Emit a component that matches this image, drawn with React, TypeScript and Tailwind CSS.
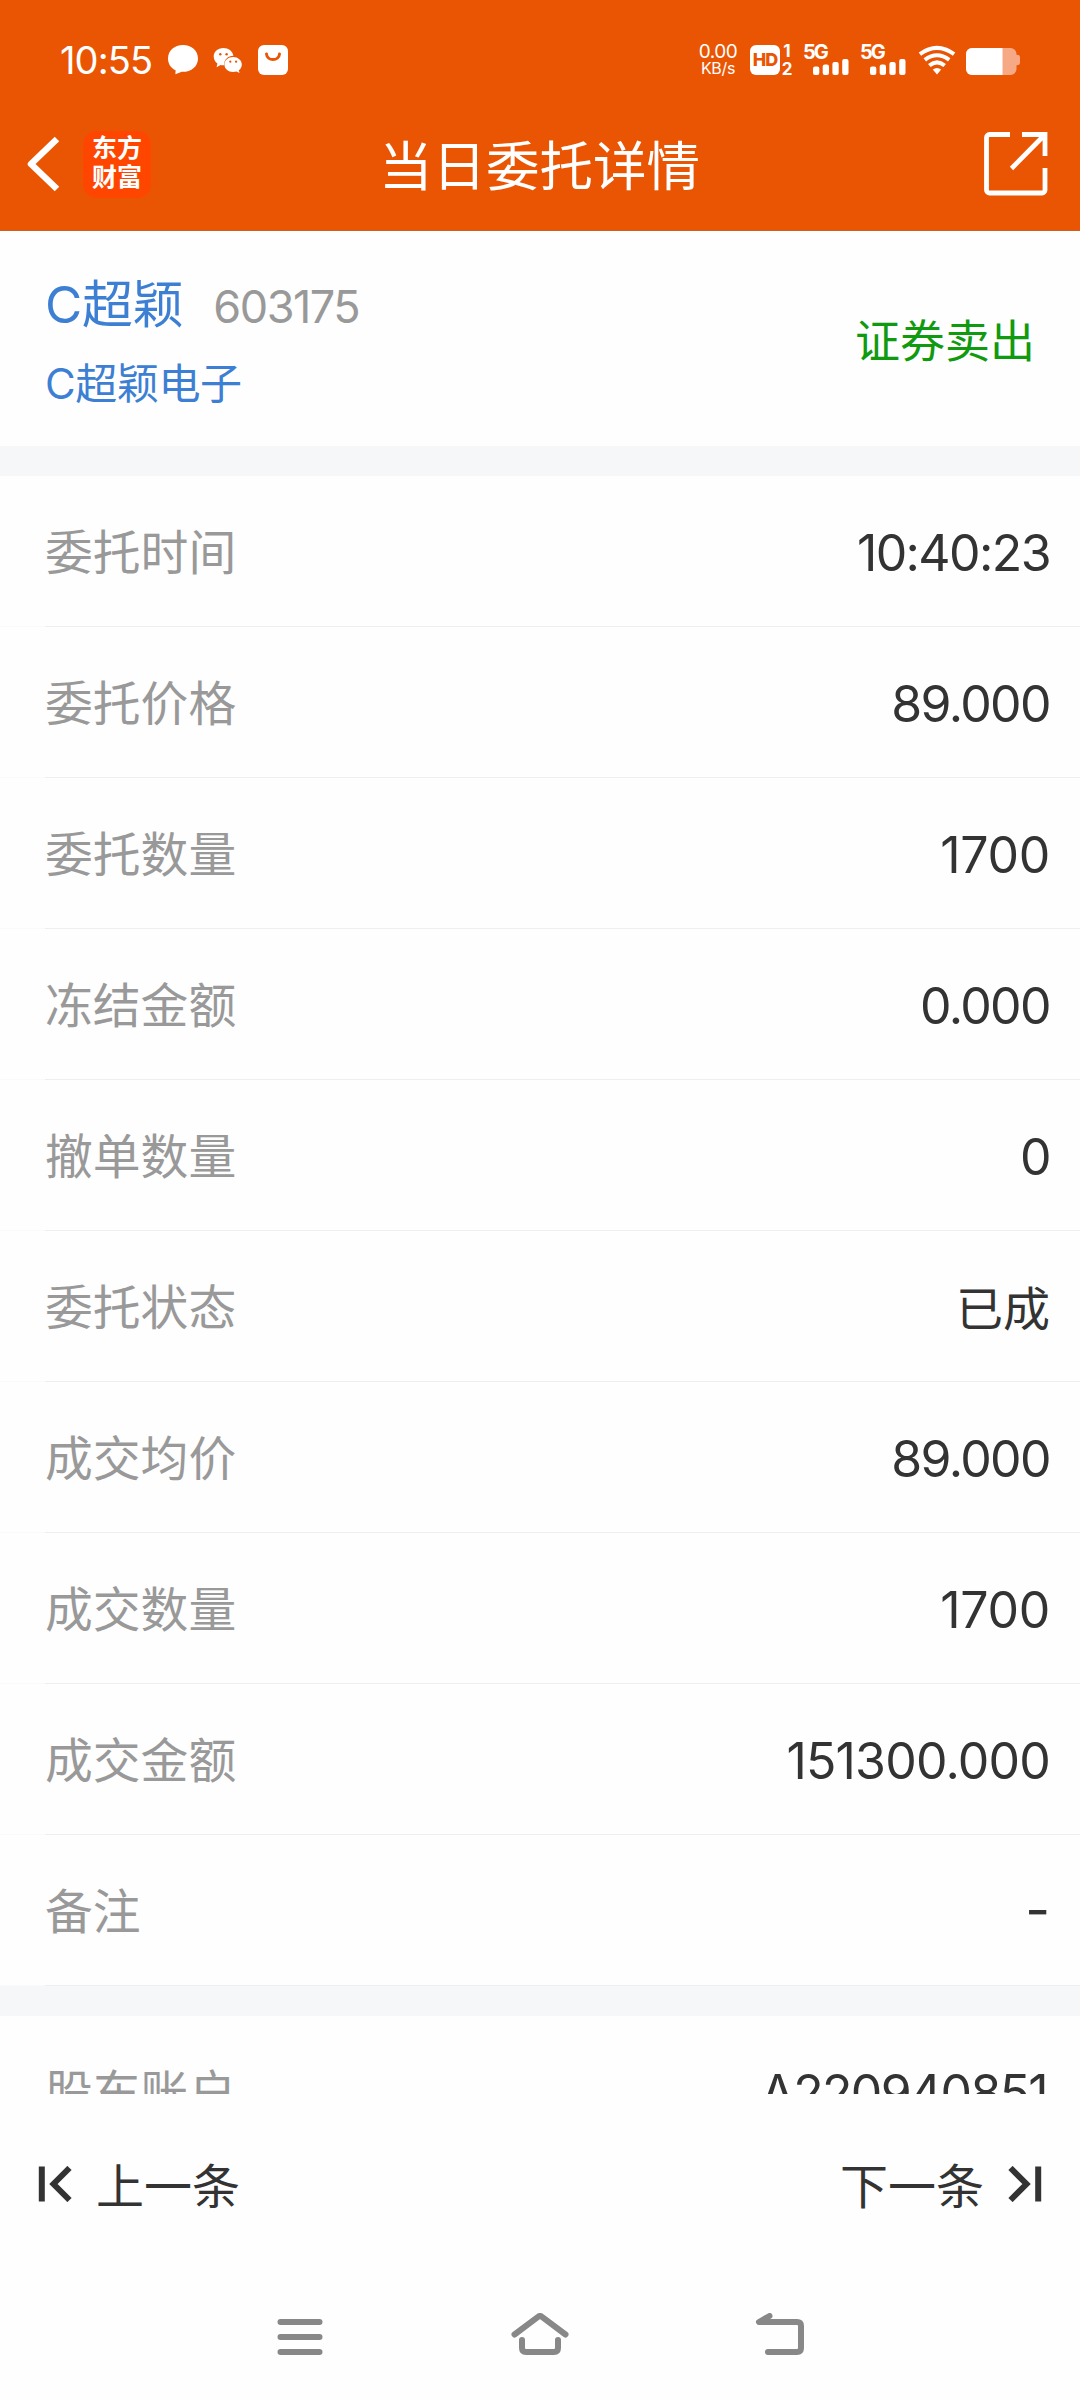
import clsx from "clsx";

type Field = { label: string; value: string; valueClass?: string };

const orderFields: Field[] = [
  { label: "委托时间", value: "10:40:23" },
  { label: "委托价格", value: "89.000" },
  { label: "委托数量", value: "1700", valueClass: "text-[50px] tracking-[-0.3px]" },
  { label: "冻结金额", value: "0.000" },
  { label: "撤单数量", value: "0" },
  { label: "委托状态", value: "已成", valueClass: "text-[47px]" },
  { label: "成交均价", value: "89.000" },
  { label: "成交数量", value: "1700", valueClass: "text-[50px] tracking-[-0.3px]" },
  { label: "成交金额", value: "151300.000", valueClass: "text-[50px] tracking-[-0.8px]" },
  { label: "备注", value: "-", valueClass: "pb-[4px] text-[54px]" }
];

const accountFields: Field[] = [
  { label: "股东账户", value: "A220940851", valueClass: "mr-[3px] text-[50px] tracking-[-1.7px]" }
];

function Signal() {
  return (
    <div className="relative h-[30px] w-[45px]">
      <span className="absolute top-0 -left-px text-[20px] leading-[15px] font-bold tracking-[-2px]">5G</span>
      <svg className="absolute top-0 left-0" width="45" height="30" viewBox="0 0 45 30" fill="currentColor">
        <rect x="9" y="21.5" width="6.3" height="8.5" rx="2" />
        <rect x="18.7" y="19.5" width="6.3" height="10.5" rx="2" />
        <rect x="28.4" y="17" width="6.3" height="13" rx="2" />
        <rect x="38.2" y="14" width="6.3" height="16" rx="2" />
      </svg>
    </div>
  );
}

function StatusBar() {
  return (
    <div className="flex h-[120px] items-center justify-between pr-[60px] pl-[60px]">
      <div className="flex items-center">
        <span className="w-[108px] text-[38px] leading-none tracking-[-0.9px] whitespace-nowrap">10:55</span>
        <svg width="30" height="30" viewBox="0 0 30 30" fill="currentColor">
          <path d="M15 0C6.500 0 0 5.800 0 13.400c0 5.400 3 9.700 7.600 11.900L7.400 29.300 13.800 26.800C23.500 27 30 21.300 30 13.400 30 5.800 23.500 0 15 0Z" />
        </svg>
        <svg className="ml-[15px]" width="30" height="30" viewBox="0 0 30 30">
          <path
            fill="currentColor"
            d="M10.300 3C4.800 3 .7 6.700.7 11.600c0 2.900 1.500 5.400 3.700 7L3.600 22.300 7.600 20c1 .3 2.200.4 3.500.3C11 14.500 14.800 11 20.400 10.800 19.500 6 15.500 3 10.300 3Z"
          />
          <path
            fill="currentColor"
            d="M20.100 11.900c-4.800 0-8.700 3.300-8.700 7.500s3.800 7.500 8.700 7.500c1.200 0 2.300-.2 3.300-.5l3.200 1.700-.8-2.900c1.900-1.400 3-3.400 3-5.800 0-4.200-3.900-7.500-8.700-7.500Z"
          />
          <g fill="#ea5504">
            <circle cx="7.300" cy="9.300" r="1.200" />
            <circle cx="13.600" cy="9.300" r="1.200" />
            <circle cx="17.300" cy="16.700" r="1.100" />
            <circle cx="23.100" cy="16.700" r="1.100" />
          </g>
        </svg>
        <svg className="ml-[15px]" width="30" height="30" viewBox="0 0 30 30">
          <rect width="30" height="30" rx="6" fill="currentColor" />
          <path d="M8.500 9C9 16.400 21 16.400 21.500 9" fill="none" stroke="#ea5504" strokeWidth="3" strokeLinecap="round" />
        </svg>
      </div>

      <div className="flex items-center">
        <div className="mr-[13px] flex w-[38px] flex-col items-center text-[19px] leading-[17px] whitespace-nowrap">
          <span className="tracking-[-0.5px]">0.00</span>
          <span className="text-[16px] leading-[17px] tracking-[-0.3px]">KB/s</span>
        </div>
        <div className="flex h-[30px] w-[30px] items-center justify-center rounded-[6px] bg-white text-[18px] leading-none font-extrabold tracking-[-1px] text-[#ea5504]">
          HD
        </div>
        <div className="mr-[12px] flex h-[30px] w-[12px] flex-col items-center pl-[2px] text-[17px] leading-[13px] font-bold">
          <span>1</span>
          <span className="mt-[5px]">2</span>
        </div>
        <Signal />
        <div className="w-[12px]" />
        <Signal />
        <svg className="ml-[12px]" width="38" height="30" viewBox="0 0 38 30" fill="none" stroke="currentColor" strokeWidth="4">
          <path d="M1.900 9.100Q19-3.300 36.100 9.100" />
          <path d="M6.800 14.900Q19 5.700 31.200 14.900" />
          <path d="M11.300 20.500Q19 14.200 26.700 20.500" />
          <path d="M14.800 24.600Q19 21.300 23.200 24.600L19 29.600Z" fill="currentColor" stroke="none" />
        </svg>
        <svg className="ml-[10px]" width="54" height="30" viewBox="0 0 54 30">
          <path d="M6 3h38.500a6 6 0 0 1 6 6v0.700c2.300 0 3.500.8 3.500 2.500v5.600c0 1.700-1.200 2.500-3.500 2.500v3.700a6 6 0 0 1-6 6H6a6 6 0 0 1-6-6V9a6 6 0 0 1 6-6Z" fill="#f7a985" />
          <path d="M6 3h30.500v27H6a6 6 0 0 1-6-6V9a6 6 0 0 1 6-6Z" fill="#fff" />
        </svg>
      </div>
    </div>
  );
}

function NavBar() {
  return (
    <div className="grid h-[111px] grid-cols-[1fr_auto_1fr] items-center border-b border-[#c8602a] pr-[32px] pb-[22px] pl-[26px]">
      <div className="flex items-center">
        <svg width="34" height="56" viewBox="0 0 34 56" fill="none" stroke="currentColor" strokeWidth="6.500">
          <path d="M31 3 5 28 31 53" strokeLinejoin="round" />
        </svg>
        <div className="ml-[23px] flex h-[67px] w-[68px] flex-col items-center justify-center rounded-[14px] bg-[#ff4600] pb-[3px] text-[25px] leading-[29px] font-bold">
          <span>东方</span>
          <span>财富</span>
        </div>
      </div>
      <h1 className="pt-[6px] pl-[5px] text-[53.500px] leading-none font-normal">当日委托详情</h1>
      <svg className="justify-self-end" width="64" height="64" viewBox="0 0 64 64" fill="none" stroke="currentColor" strokeWidth="4.800">
        <path d="M26 2.500H5.500a3 3 0 0 0-3 3V58a3 3 0 0 0 3 3H58a3 3 0 0 0 3-3V36" />
        <path d="M38 2.500H61V24M60 3.500 27.500 36.500" />
      </svg>
    </div>
  );
}

function FieldRow({ label, value, valueClass = "text-[50px] tracking-[-1.6px]" }: Field) {
  return (
    <div className="flex h-[151px] flex-col">
      <div className="flex flex-1 items-center justify-between pr-[30px] pl-[45px]">
        <span className="pt-[6px] text-[47.800px] leading-none text-[#999999]">{label}</span>
        <span className={clsx("pt-[4px] leading-none text-[#333333]", valueClass)}>{value}</span>
      </div>
      <div className="flex h-px bg-[#fafafa] pl-[45px]">
        <div className="flex-1 bg-[#eeeeee]" />
      </div>
    </div>
  );
}

function Band() {
  return <div className="h-[30px] bg-[#f6f7f9]" />;
}

export default function App() {
  return (
    <div className="flex h-[2400px] w-[1080px] flex-col overflow-hidden bg-[#fefefe] font-['Inter','Noto_Sans_CJK_SC',sans-serif]">
      <header className="bg-[#ea5504] text-white">
        <StatusBar />
        <NavBar />
      </header>

      <main className="h-[1863px] overflow-hidden">
        <section className="flex h-[215px] items-center justify-between px-[45px] pt-[7px]">
          <div className="pt-[2px] text-[#3d7fd3]">
            <div className="flex items-baseline">
              <span className="text-[51px] leading-[60px] tracking-[-0.3px]">C超颖</span>
              <span className="ml-[30px] text-[45px] leading-[60px] tracking-[-1.5px] text-[#999999]">603175</span>
            </div>
            <div className="mt-[20px] text-[42px] leading-[54px] tracking-[-0.4px]">C超颖电子</div>
          </div>
          <span className="pb-[2px] text-[45px] leading-none text-[#109a10]">证券卖出</span>
        </section>
        <Band />
        {orderFields.map((field) => (
          <FieldRow key={field.label} {...field} />
        ))}
        <Band />
        {accountFields.map((field) => (
          <FieldRow key={field.label} {...field} />
        ))}
      </main>

      <div className="flex h-[180px] items-center justify-between px-[38px] text-[48px] leading-none text-[#333333]">
        <button className="flex items-center">
          <svg width="36" height="36" viewBox="0 0 36 36" fill="none" stroke="currentColor" strokeWidth="6">
            <path d="M3.800 0.500V35.500M31.500 2 15.500 18 31.500 34" />
          </svg>
          <span className="ml-[22px] pt-[5px]">上一条</span>
        </button>
        <button className="flex items-center">
          <span className="mr-[22px] pt-[5px]">下一条</span>
          <svg width="36" height="36" viewBox="0 0 36 36" fill="none" stroke="currentColor" strokeWidth="6">
            <path d="M32.200 0.500V35.500M4.500 2 20.500 18 4.500 34" />
          </svg>
        </button>
      </div>

      <nav className="grid flex-1 grid-cols-[1fr_60px_1fr] items-center px-[276px] pb-px text-[#888888]">
        <svg width="48" height="48" viewBox="0 0 48 48" fill="none" stroke="currentColor" strokeWidth="6" strokeLinecap="round">
          <path d="M4.500 9H43.500M4.500 24H43.500M4.500 39H43.500" />
        </svg>
        <svg width="60" height="48" viewBox="0 0 60 48" fill="none" stroke="currentColor" strokeWidth="6" strokeLinecap="round" strokeLinejoin="round">
          <path d="M4.500 21.500 28 3.800Q30 2.200 32 3.800L55.500 21.500M12 27V35Q12 39 16 39H44Q48 39 48 35V27" />
        </svg>
        <svg className="justify-self-end" width="50" height="48" viewBox="0 0 50 48" fill="none" stroke="currentColor" strokeWidth="6" strokeLinecap="round" strokeLinejoin="round">
          <path d="M15.500 3 5 9H43Q47 9 47 13V35Q47 39 43 39H14" />
        </svg>
      </nav>
    </div>
  );
}
